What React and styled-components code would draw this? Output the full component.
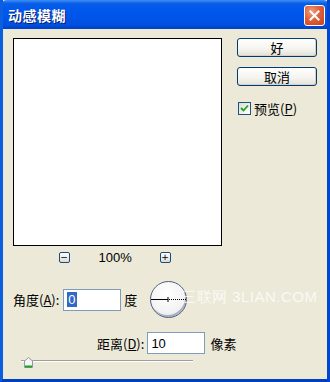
import React from "react"
import styled, { createGlobalStyle } from "styled-components"

const Global = createGlobalStyle`
  html, body {
    margin: 0;
    padding: 0;
    background: #ece9d8;
  }
  body {
    font-family: "Noto Sans CJK SC", "DejaVu Sans", sans-serif;
    font-size: 12px;
    color: #000;
  }
`

const Frame = styled.div`
  width: 330px;
  height: 382px;
  box-sizing: border-box;
  display: flex;
  flex-direction: column;
  background: #ece9d8;
  border: 3px solid #0054e3;
  border-top: none;
  border-left-color: #0a5fe0;
  border-right-color: #0047d0;
  border-bottom-color: #0040c0;
  position: relative;
  overflow: hidden;
`

const TitleBar = styled.div`
  height: 29px;
  margin: 0 -3px;
  flex: none;
  display: flex;
  align-items: center;
  justify-content: space-between;
  padding: 0 5px 0 8px;
  border-radius: 7px 7px 0 0;
  background: linear-gradient(
    180deg,
    #3d8ef8 0%,
    #0a5fe5 12%,
    #0058ee 30%,
    #0055e8 60%,
    #0050df 85%,
    #0041c6 100%
  );
`

const Title = styled.span`
  color: #fff;
  font-weight: bold;
  font-size: 14px;
  letter-spacing: 0.5px;
  text-shadow: 1px 1px 0 #0a1e6e;
`

const CloseBtn = styled.div`
  width: 19px;
  height: 19px;
  border: 1px solid #fff;
  border-radius: 3px;
  background: radial-gradient(circle at 35% 30%, #f0a080 0%, #e0603c 45%, #c8401e 100%);
  display: flex;
  align-items: center;
  justify-content: center;
  margin-top: 2px;
`

const Body = styled.div`
  flex: 1;
  padding: 9px 0 0 10px;
  display: flex;
  flex-direction: column;
`

const Top = styled.div`
  display: flex;
  align-items: flex-start;
`

const LeftCol = styled.div`
  display: flex;
  flex-direction: column;
  width: 209px;
`

const Preview = styled.div`
  width: 207px;
  height: 206px;
  background: #fff;
  border: 1px solid #000;
`

const ZoomRow = styled.div`
  height: 22px;
  display: flex;
  align-items: center;
  justify-content: center;
  gap: 29px;
  padding-right: 6px;
`

const ZoomBtn = styled.div`
  width: 9px;
  height: 9px;
  border: 1px solid #1c4a7a;
  border-radius: 2px;
  background: linear-gradient(180deg, #fff 0%, #dcdcd4 100%);
  display: flex;
  align-items: center;
  justify-content: center;
  font-family: "DejaVu Sans", sans-serif;
  font-size: 9px;
  line-height: 9px;
  color: #000;
`

const ZoomText = styled.span`
  font-family: "Liberation Sans", "DejaVu Sans", sans-serif;
  font-size: 13px;
  width: 32px;
  text-align: center;
`

const RightCol = styled.div`
  margin-left: 15px;
  display: flex;
  flex-direction: column;
  gap: 10px;
`

const Button = styled.div`
  width: 78px;
  height: 17px;
  border: 1px solid #003c74;
  border-radius: 3px;
  background: linear-gradient(180deg, #ffffff 0%, #f4f3ee 60%, #e3e1d6 100%);
  box-shadow: inset -1px -1px 0 #d6d0c5;
  display: flex;
  align-items: center;
  justify-content: center;
  font-size: 13px;
  line-height: 17px;
`

const CheckRow = styled.label`
  display: flex;
  align-items: center;
  gap: 3px;
  margin-top: 3px;
  margin-left: 1px;
  font-size: 13px;
`

const Box = styled.span`
  width: 11px;
  height: 11px;
  border: 1px solid #1c5180;
  background: linear-gradient(135deg, #dcdcd4 0%, #fff 100%);
  display: flex;
  align-items: center;
  justify-content: center;
`

const U = styled.span`
  text-decoration: underline;
`

const Row = styled.div`
  display: flex;
  align-items: center;
  padding-left: ${(p) => p.$indent || 0}px;
  margin-top: ${(p) => p.$top || 0}px;
  font-size: 13px;
`

const Field = styled.div`
  width: 53px;
  height: 20px;
  border: 1px solid #7f9db9;
  background: #fff;
  margin: 0 3px 0 ${(p) => p.$gap || 2}px;
  display: flex;
  align-items: center;
  padding-left: 3px;
  box-sizing: content-box;
  font-family: "Liberation Sans", "DejaVu Sans", sans-serif;
  font-size: 13px;
`

const Selected = styled.span`
  background: #316ac5;
  color: #fff;
  padding: 0 1px;
  line-height: 15px;
`

const Dial = styled.div`
  margin-left: 13px;
  width: 35px;
  height: 35px;
  border: 1px solid #55607a;
  border-radius: 50%;
  background: radial-gradient(circle at 45% 35%, #ffffff 0%, #f4f4f4 55%, #e2e2e2 100%);
  box-shadow: inset -1px -2px 0 #aab0c0;
  position: relative;
  display: flex;
  align-items: center;
`

const Watermark = styled.span`
  position: absolute;
  left: 178px;
  top: 288px;
  color: #fff;
  opacity: 0.75;
  font-family: "Liberation Sans", "DejaVu Sans", sans-serif;
  font-size: 15px;
  letter-spacing: 0.5px;
  pointer-events: none;
`

const Slider = styled.div`
  margin: 2px 0 0 8px;
  width: 172px;
  height: 10px;
  position: relative;
  display: flex;
  align-items: center;
`

const Track = styled.div`
  flex: 1;
  height: 1px;
  background: #9d9d9d;
  border-bottom: 1px solid #fff;
`

const Thumb = styled.div`
  position: absolute;
  left: 3px;
  top: -2px;
  width: 9px;
  height: 11px;
`

export default function App() {
  return (
    <>
      <Global />
      <Frame>
        <TitleBar>
          <Title>动感模糊</Title>
          <CloseBtn>
            <svg width="11" height="11" viewBox="0 0 11 11">
              <path d="M1.5 1.5 L9.5 9.5 M9.5 1.5 L1.5 9.5" stroke="#fff" strokeWidth="2" strokeLinecap="square" />
            </svg>
          </CloseBtn>
        </TitleBar>
        <Body>
          <Top>
            <LeftCol>
              <Preview />
              <ZoomRow>
                <ZoomBtn>−</ZoomBtn>
                <ZoomText>100%</ZoomText>
                <ZoomBtn>+</ZoomBtn>
              </ZoomRow>
            </LeftCol>
            <RightCol>
              <Button>好</Button>
              <Button>取消</Button>
              <CheckRow>
                <Box>
                  <svg width="9" height="9" viewBox="0 0 9 9">
                    <path d="M1 4 L3.5 6.5 L8 1.5" stroke="#21a121" strokeWidth="1.8" fill="none" />
                  </svg>
                </Box>
                <span>
                  预览(<U>P</U>)
                </span>
              </CheckRow>
            </RightCol>
          </Top>
          <Row $top={13}>
            角度(<U>A</U>):
            <Field $gap={4}>
              <Selected>0</Selected>
            </Field>
            度
            <Dial>
              <svg width="35" height="35" viewBox="0 0 35 35">
                <line x1="0" y1="17.5" x2="17" y2="17.5" stroke="#000" strokeWidth="1" />
                <line x1="17" y1="15" x2="17" y2="20" stroke="#000" strokeWidth="1" />
                <line x1="18" y1="17.5" x2="35" y2="17.5" stroke="#000" strokeWidth="1" strokeDasharray="1 1" />
              </svg>
            </Dial>
          </Row>
          <Row $indent={84} $top={14}>
            距离(<U>D</U>):
            <Field $gap={3}>10</Field>
            <span style={{ marginLeft: 2 }}>像素</span>
          </Row>
          <Slider>
            <Track />
            <Thumb>
              <svg width="9" height="11" viewBox="0 0 9 11">
                <path d="M0.5 4 L4.5 0.5 L8.5 4 L8.5 10.5 L0.5 10.5 Z" fill="#f4f4f0" stroke="#8c9aa8" />
                <path d="M1 9.5 L8 9.5" stroke="#21a121" strokeWidth="2" />
              </svg>
            </Thumb>
          </Slider>
        </Body>
        <Watermark>三联网 3LIAN.COM</Watermark>
      </Frame>
    </>
  )
}
